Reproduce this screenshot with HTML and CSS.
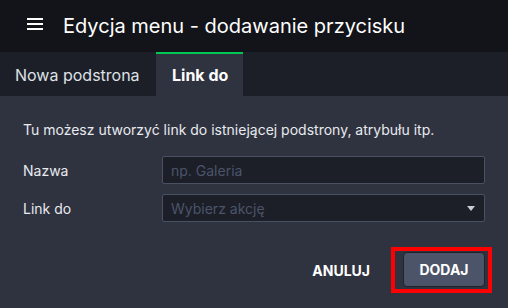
FILE: index.html
```html
<!DOCTYPE html>
<html lang="pl">
<head>
<meta charset="utf-8">
<link rel="stylesheet" href="styles.css">
</head>
<body>
<div class="dialog">
  <header class="header">
    <svg class="burger" width="16" height="12" viewBox="0 0 16 12"><rect x="0" y="0" width="16" height="2" fill="#fff"/><rect x="0" y="5" width="16" height="2" fill="#fff"/><rect x="0" y="10" width="16" height="2" fill="#fff"/></svg>
    <h1 class="title">Edycja menu - dodawanie przycisku</h1>
  </header>
  <nav class="tabs">
    <div class="tab">Nowa podstrona</div>
    <div class="tab active">Link do</div>
  </nav>
  <main class="content">
    <p class="desc">Tu możesz utworzyć link do istniejącej podstrony, atrybułu itp.</p>
    <div class="form">
      <label class="label">Nazwa</label>
      <div class="field"><span class="ph">np. Galeria</span></div>
      <label class="label">Link do</label>
      <div class="field select"><span class="ph">Wybierz akcję</span><svg class="caret" width="8" height="5" viewBox="0 0 8 5"><path d="M0 0H8L4 5Z" fill="#c9ccd4"/></svg></div>
    </div>
    <div class="actions">
      <button class="btn-text">ANULUJ</button>
      <div class="highlight"><button class="btn">DODAJ</button></div>
    </div>
  </main>
</div>
</body>
</html>
```
FILE: styles.css
```css
* { box-sizing: border-box; }
html, body { margin: 0; padding: 0; }
body {
  width: 508px;
  height: 308px;
  background: #2f3340;
  font-family: Inter, "Noto Sans", sans-serif;
  color: #fff;
  overflow: hidden;
}
.dialog { display: flex; flex-direction: column; height: 308px; }
.header {
  height: 52px;
  background: #131419;
  display: flex;
  align-items: center;
  padding-left: 27px;
}
.burger { display: block; margin-top: -4px; }
.title {
  margin: 0 0 0 20px;
  font-size: 20px;
  font-weight: 400;
  color: #fff;
  letter-spacing: 0;
}
.tabs {
  height: 44px;
  background: #1c1f28;
  display: flex;
}
.tab {
  flex: none;
  white-space: nowrap;
  font-size: 16px;
  color: #dfe1e6;
  padding: 0 15px;
  width: 156px;
  display: flex;
  align-items: center;
  border-top: 2px solid transparent;
}
.tab.active {
  width: 87px;
  padding: 0 0 0 16px;
  background: #2f3340;
  border-top-color: #00c853;
  font-weight: 700;
  color: #fff;
}
.content { padding: 24px 23px 0 23px; }
.desc {
  margin: 0;
  font-size: 14px;
  line-height: 20px;
  color: #e8eaee;
}
.form {
  margin-top: 16px;
  display: grid;
  grid-template-columns: 139px 323px;
  row-gap: 10px;
  align-items: center;
}
.label { font-size: 14px; color: #e8eaee; }
.field {
  height: 28px;
  background: #1c1f28;
  border: 1px solid #4a5164;
  border-radius: 2px;
  display: flex;
  align-items: center;
  padding: 0 8px;
}
.ph { font-size: 14px; color: #4b5469; }
.select { justify-content: space-between; padding-right: 9px; }
.caret { display: block; }
.actions {
  margin-top: 25px;
  display: flex;
  justify-content: flex-end;
  align-items: center;
  margin-right: -7px;
}
.btn-text {
  background: none;
  border: 0;
  font-family: inherit;
  font-size: 14px;
  font-weight: 700;
  color: #fff;
  padding: 0;
  margin-right: 21px;
}
.highlight {
  border: 4px solid #ff0000;
  padding: 1px 3px 2px 8px;
}
.btn {
  width: 82px;
  height: 35px;
  background: #4b5468;
  border: 1px solid #1f222a;
  border-radius: 4px;
  font-family: inherit;
  font-size: 14px;
  font-weight: 700;
  color: #fff;
  display: block;
}
```
